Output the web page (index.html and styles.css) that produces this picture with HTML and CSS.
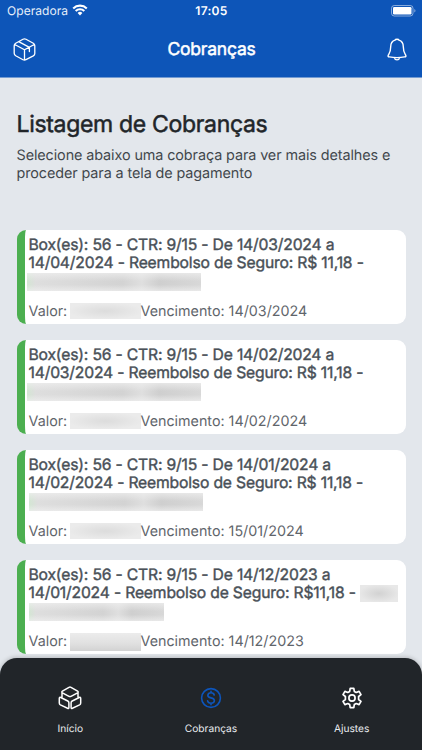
FILE: index.html
```
<!DOCTYPE html>
<html lang="pt-BR">
<head>
<meta charset="utf-8">
<title>Cobranças</title>
<link rel="stylesheet" href="styles.css">
</head>
<body>
<div class="app">
  <header class="header">
    <div class="status">
      <div class="carrier"><span>Operadora</span>
        <svg width="16" height="12" viewBox="0 0 16 12"><path d="M1.200 4.400a9.700 9.700 0 0 1 13.600 0M3.700 7a6.100 6.100 0 0 1 8.600 0" fill="none" stroke="#fff" stroke-width="2.100"/><path d="M8 11.400 5.600 9a3.400 3.400 0 0 1 4.800 0z" fill="#fff"/></svg>
      </div>
      <div class="time">17:05</div>
      <svg class="battery" width="25" height="12" viewBox="0 0 25 12"><rect x=".5" y=".5" width="21.500" height="10.500" rx="2.800" fill="none" stroke="#fff" stroke-opacity=".5"/><rect x="2" y="2" width="18.500" height="7.500" rx="1.200" fill="#fff"/><path d="M23.300 4v3.600q1.200-.5 1.200-1.800T23.300 4z" fill="#fff" fill-opacity=".5"/></svg>
    </div>
    <div class="bar">
      <svg width="23" height="23" viewBox="0 0 23 23" fill="none" stroke="#fff" stroke-width="1.300" stroke-linejoin="round" stroke-linecap="round"><path d="M10 1.200q1.500-.8 3 0l7.300 4.100q1.500.9 1.500 2.500v7.600q0 1.600-1.500 2.500L13 21.700q-1.500.8-3 0l-7.300-3.900q-1.500-.9-1.500-2.500V7.800q0-1.600 1.500-2.500zM1.700 6.500l9.800 5.300 9.800-5.300M11.500 11.800v10.400M5.700 3.700l10.700 5.600v4.200"/></svg>
      <h1 class="bar-title">Cobranças</h1>
      <svg width="20" height="23" viewBox="0 0 20 23" fill="none" stroke="#fff" stroke-width="1.400" stroke-linejoin="round" stroke-linecap="round"><path d="M10 1.200Q8.300 1.200 8 2.200 3.700 3.700 3.700 8.700c0 5-1 6.200-2.300 8.200q-1 2 .9 2 7.700 1.500 15.400 0 1.900 0 .9-2c-1.300-2-2.300-3.200-2.300-8.200q0-5-4.300-6.500-.3-1-2-1zM7 19.600q.9 2.300 3 2.300t3-2.300"/></svg>
    </div>
  </header>
  <main class="content">
    <h2 class="title">Listagem de Cobranças</h2>
    <p class="intro">Selecione abaixo uma cobraça para ver mais detalhes e<br>proceder para a tela de pagamento</p>
    <div class="list">
      <article class="card">
        <h3>Box(es): 56 - CTR: 9/15 - De 14/03/2024 a<br>14/04/2024 - Reembolso de Seguro: R$ 11,18 -</h3>
        <div class="mask mask-line"></div>
        <div class="details"><span class="value">Valor:</span><i class="mask mask-value"></i><span>Vencimento: 14/03/2024</span></div>
      </article>
      <article class="card">
        <h3>Box(es): 56 - CTR: 9/15 - De 14/02/2024 a<br>14/03/2024 - Reembolso de Seguro: R$ 11,18 -</h3>
        <div class="mask mask-line"></div>
        <div class="details"><span class="value">Valor:</span><i class="mask mask-value"></i><span>Vencimento: 14/02/2024</span></div>
      </article>
      <article class="card">
        <h3>Box(es): 56 - CTR: 9/15 - De 14/01/2024 a<br>14/02/2024 - Reembolso de Seguro: R$ 11,18 -</h3>
        <div class="mask mask-line mask-third"></div>
        <div class="details"><span class="value">Valor:</span><i class="mask mask-value"></i><span>Vencimento: 15/01/2024</span></div>
      </article>
      <article class="card">
        <h3>Box(es): 56 - CTR: 9/15 - De 14/12/2023 a<br>14/01/2024 - Reembolso de Seguro: R$11,18 -<i class="mask mask-end"></i></h3>
        <div class="mask mask-line mask-short"></div>
        <div class="details"><span class="value">Valor:</span><i class="mask mask-value mask-dark"></i><span>Vencimento: 14/12/2023</span></div>
      </article>
    </div>
  </main>
  <nav class="tabs">
    <a class="tab">
      <svg width="24" height="24" viewBox="0 0 24 24" fill="none" stroke="#fff" stroke-width="1.500" stroke-linejoin="round"><path d="M11 1.300q1-.5 2 0l6.600 3.900q1.200.8 0 1.600L13 10.300q-1 .5-2 0L4.400 6.800q-1.200-.8 0-1.600zM4 6.500v4.700M20 6.500v4.700M1.300 12.500q0-1.700 1.500-1l7 3.500q1.100.6 1.100 1.800v4.700q0 1.500-1.300.8L2.400 18.900q-1.100-.6-1.100-1.800zM22.700 12.500q0-1.700-1.500-1l-7 3.500q-1.100.6-1.100 1.800v4.700q0 1.500 1.300.8l7.200-3.400q1.100-.6 1.100-1.800z"/></svg>
      <span>Início</span>
    </a>
    <a class="tab active">
      <svg width="24" height="24" viewBox="0 0 24 24" fill="none" stroke="#0d55bb" stroke-width="1.600" stroke-linecap="round"><circle cx="12" cy="12" r="9.400"/><path d="M15.200 9q-.4-2.200-3.200-2.200T8.800 9.300q0 2 3.200 2.600 3.400.7 3.400 2.900T12 17.300q-3 0-3.400-2.400M12 5.200v1.600M12 17.300v1.500"/></svg>
      <span>Cobranças</span>
    </a>
    <a class="tab">
      <svg width="24" height="24" viewBox="0 0 24 24" fill="none" stroke="#fff" stroke-width="1.700" stroke-linejoin="round"><circle cx="12" cy="12" r="3.100"/><path d="M10.200 2.400h3.600l.5 3 1.900 1.100 2.900-1.100 1.900 3.200-2.400 1.900v3l2.400 1.900-1.900 3.200-2.900-1.100-1.900 1.100-.5 3h-3.600l-.5-3-1.900-1.100-2.900 1.100L3 15.400l2.400-1.900v-3L3 8.600l1.900-3.200 2.900 1.100 1.900-1.100z"/></svg>
      <span>Ajustes</span>
    </a>
  </nav>
</div>
</body>
</html>
```
FILE: styles.css
```
* { box-sizing: border-box; margin: 0; padding: 0; }
body { font-family: Inter, "Liberation Sans", sans-serif; background: #e3e7ec; overflow: hidden; text-rendering: geometricPrecision; }
svg { display: block; flex: none; }
.app { height: 750px; width: 422px; display: flex; flex-direction: column; position: relative; }
.header { background: #0d55b8; color: #fff; height: 78px; flex: none; border-bottom: 1px solid #739bd2; }
.status { height: 22px; display: grid; grid-template-columns: 1fr auto 1fr; align-items: center; padding: 0 6px 0 7px; }
.carrier { display: flex; align-items: center; gap: 4px; font-size: 12px; line-height: 22px; color: #e6eefa; letter-spacing: .06px; }
.carrier svg { margin-top: -2px; }
.time { font-size: 12px; font-weight: 600; letter-spacing: .3px; line-height: 22px; }
.battery { justify-self: end; margin-top: -1px; }
.bar { height: 55px; display: flex; align-items: center; justify-content: space-between; padding: 0 15px 0 13px; }
.bar-title { font-size: 17.500px; line-height: 24px; font-weight: 400; -webkit-text-stroke: .5px; letter-spacing: -.2px; }
.content { padding: 32px 16.500px 0 16.500px; flex: 1; min-height: 0; overflow: hidden; }
.title { font-size: 23px; line-height: 28px; font-weight: 400; -webkit-text-stroke: .5px; letter-spacing: -.32px; color: #212529; white-space: nowrap; }
.intro { margin-top: 9px; font-size: 14.400px; line-height: 17.500px; font-weight: 400; color: #42474c; letter-spacing: -.1px; white-space: nowrap; }
.list { margin-top: 48px; display: flex; flex-direction: column; gap: 16px; }
.card { height: 94px; flex: none; background: #fff; border-left: 8.500px solid #4caf50; border-radius: 9px; padding: 5.500px 0 0 4px; color: #5f656b; white-space: nowrap; overflow: hidden; }
.card h3 { font-size: 15.700px; line-height: 18.500px; font-weight: 400; -webkit-text-stroke: .4px; letter-spacing: -.18px; color: #495057; }
.mask { display: block; }
.mask-line { width: 174px; height: 18px; margin: 0 0 0 -2px; background: linear-gradient(180deg, #f0f0f0b0, transparent 45%, transparent 65%, #f0f0f0b0), linear-gradient(90deg, #d3e6d3, #dedede 5%, #dadada 24%, #d3d3d3 55%, #dfdfdf 66%, #cfcfcf 76%, #d8d8d8); }
.mask-third { margin-left: 0; }
.mask-short { width: 135px; margin-left: 0; }
.mask-end { display: inline-block; width: 38px; height: 17px; margin: 0 0 -4px 4px; background: radial-gradient(ellipse, #d2d2d2, #e8e8e8 75%); }
.details { margin-top: 12px; display: flex; height: 17px; font-size: 14.300px; line-height: 18px; font-weight: 400; }
.value { width: 41px; }
.mask-value { width: 71px; height: 16px; background: radial-gradient(ellipse, #dcdcdc, #ebebeb 75%); }
.mask-dark { height: 18px; background: linear-gradient(180deg, #ececec, #e0e0e0 60%, #d2d2d2); }
.tabs { position: absolute; left: 0; right: 0; bottom: 0; height: 92px; background: #212529; border-radius: 17px 17px 0 0; box-shadow: 0 -1px 4px #0003; display: grid; grid-template-columns: repeat(3, 1fr); padding-top: 28px; }
.tab { display: flex; flex-direction: column; align-items: center; color: #e9ecef; font-size: 10.200px; line-height: 14px; }
.tab span { margin-top: 12px; }
```
